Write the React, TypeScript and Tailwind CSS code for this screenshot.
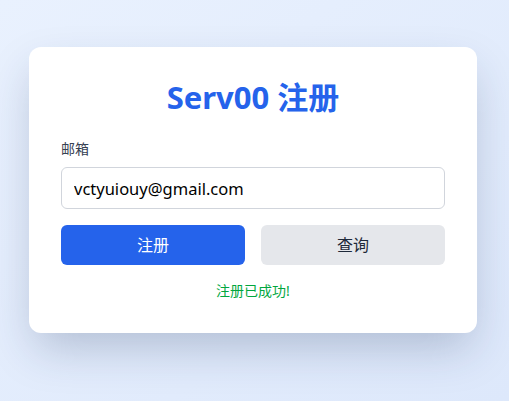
import React from "react";

export default function App() {
  const font = { fontFamily: '"Noto Sans", "Noto Sans CJK SC", sans-serif' };
  return (
    <div
      className="w-[509px] h-[401px] bg-gradient-to-br from-[#e9f1fe] to-[#dde8fb] pt-[47px] pl-[29px]"
      style={font}
    >
      <div className="w-[448px] bg-white rounded-xl shadow-[0_20px_45px_-6px_rgba(30,50,90,0.25)] p-8">
        <h1 className="text-center text-[31px] leading-9 font-bold text-[#2563eb]">Serv00 注册</h1>
        <label className="block mt-6 text-sm leading-5 text-gray-700">邮箱</label>
        <input
          className="mt-2 w-full h-[42px] px-3 border border-gray-300 rounded-md text-[16.5px] text-black outline-none"
          defaultValue="vctyuiouy@gmail.com"
          style={font}
        />
        <div className="mt-4 grid grid-cols-2 gap-4">
          <button className="h-10 rounded-md bg-[#2563eb] text-white text-base">注册</button>
          <button className="h-10 rounded-md bg-gray-200 text-gray-800 text-base">查询</button>
        </div>
        <p className="mt-4 text-center text-sm leading-5 text-green-600">注册已成功!</p>
      </div>
    </div>
  );
}
